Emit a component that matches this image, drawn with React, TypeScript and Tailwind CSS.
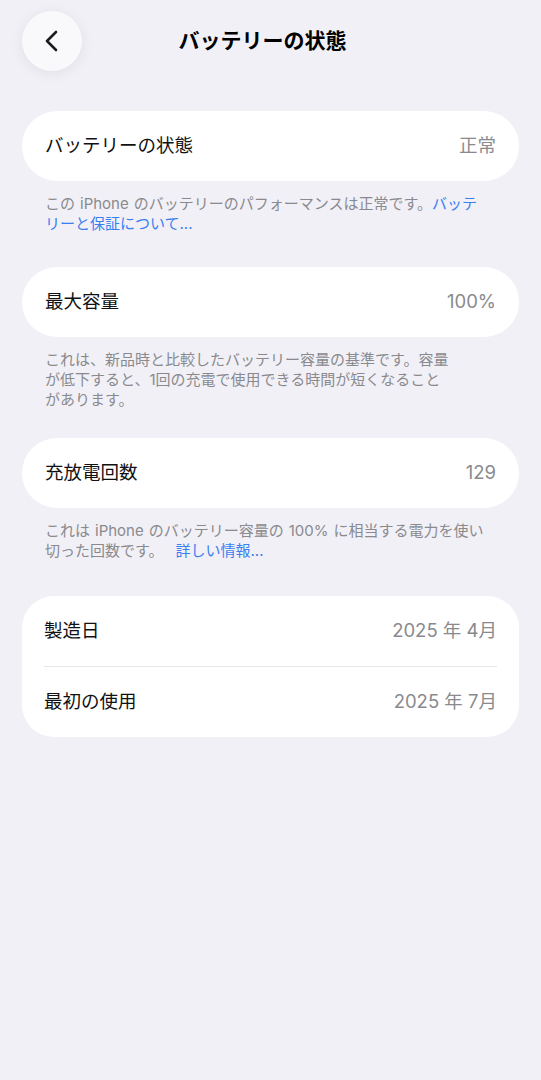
import type { ReactNode } from 'react'

const FONT = "font-['Inter','Noto_Sans_CJK_JP',sans-serif]"

function Card({ label, value }: { label: string; value: string }) {
  return (
    <div className="mx-[22px] h-[70px] rounded-full bg-white px-[23px] flex items-center justify-between">
      <span className="text-[18.5px] text-[#111113]">{label}</span>
      <span className="text-[18.5px] text-[#8a8a8e]">{value}</span>
    </div>
  )
}

function Note({ children }: { children: ReactNode }) {
  return (
    <p className="mx-[45px] mt-[13px] text-[15px] leading-[20px] text-[#8a8a8e]">
      {children}
    </p>
  )
}

function Link({ children }: { children: ReactNode }) {
  return <span className="text-[#3a7ff0]">{children}</span>
}

// latin runs inside Japanese text get a little air on both sides
function Latin({ children }: { children: ReactNode }) {
  return <span className="mx-[5px]">{children}</span>
}

function Row({ label, value }: { label: string; value: string }) {
  return (
    <div className="h-[70px] flex items-center justify-between">
      <span className="text-[18.5px] text-[#111113]">{label}</span>
      <span className="text-[18.5px] text-[#8a8a8e]">{value}</span>
    </div>
  )
}

export default function App() {
  return (
    <div className={`min-h-[1080px] w-full bg-[#f1f0f6] ${FONT}`}>
      {/* header */}
      <div className="flex items-center pt-[11px] pl-[22px] pr-[22px]">
        <button className="w-[60px] h-[60px] rounded-full bg-[#f9f9fb] shadow-[0_2px_14px_rgba(0,0,0,0.07)] flex items-center justify-center">
          <svg width="16" height="24" viewBox="0 0 16 24" fill="none">
            <path d="M12 3 L3 12 L12 21" stroke="#1c1c1e" strokeWidth="2.6" strokeLinecap="round" strokeLinejoin="round" />
          </svg>
        </button>
        <h1 className="flex-1 text-center pr-[76px] text-[21px] font-bold text-black">
          バッテリーの状態
        </h1>
      </div>

      <div className="mt-[40px]">
        <Card label="バッテリーの状態" value="正常" />
        <Note>
          この<Latin>iPhone</Latin>のバッテリーのパフォーマンスは正常です。<Link>バッテ</Link>
          <br />
          <Link>リーと保証について...</Link>
        </Note>
      </div>

      <div className="mt-[33px]">
        <Card label="最大容量" value="100%" />
        <Note>
          これは、新品時と比較したバッテリー容量の基準です。容量
          <br />
          が低下すると、1回の充電で使用できる時間が短くなること
          <br />
          があります。
        </Note>
      </div>

      <div className="mt-[28px]">
        <Card label="充放電回数" value="129" />
        <Note>
          これは<Latin>iPhone</Latin>のバッテリー容量の<Latin>100%</Latin>に相当する電力を使い
          <br />
          切った回数です。<span className="ml-[12px]" />
          <Link>詳しい情報...</Link>
        </Note>
      </div>

      <div className="mt-[35px] mx-[22px] rounded-[32px] bg-white px-[22px]">
        <Row label="製造日" value="2025 年 4月" />
        <div className="h-px bg-[#e6e6eb]" />
        <Row label="最初の使用" value="2025 年 7月" />
      </div>
    </div>
  )
}
